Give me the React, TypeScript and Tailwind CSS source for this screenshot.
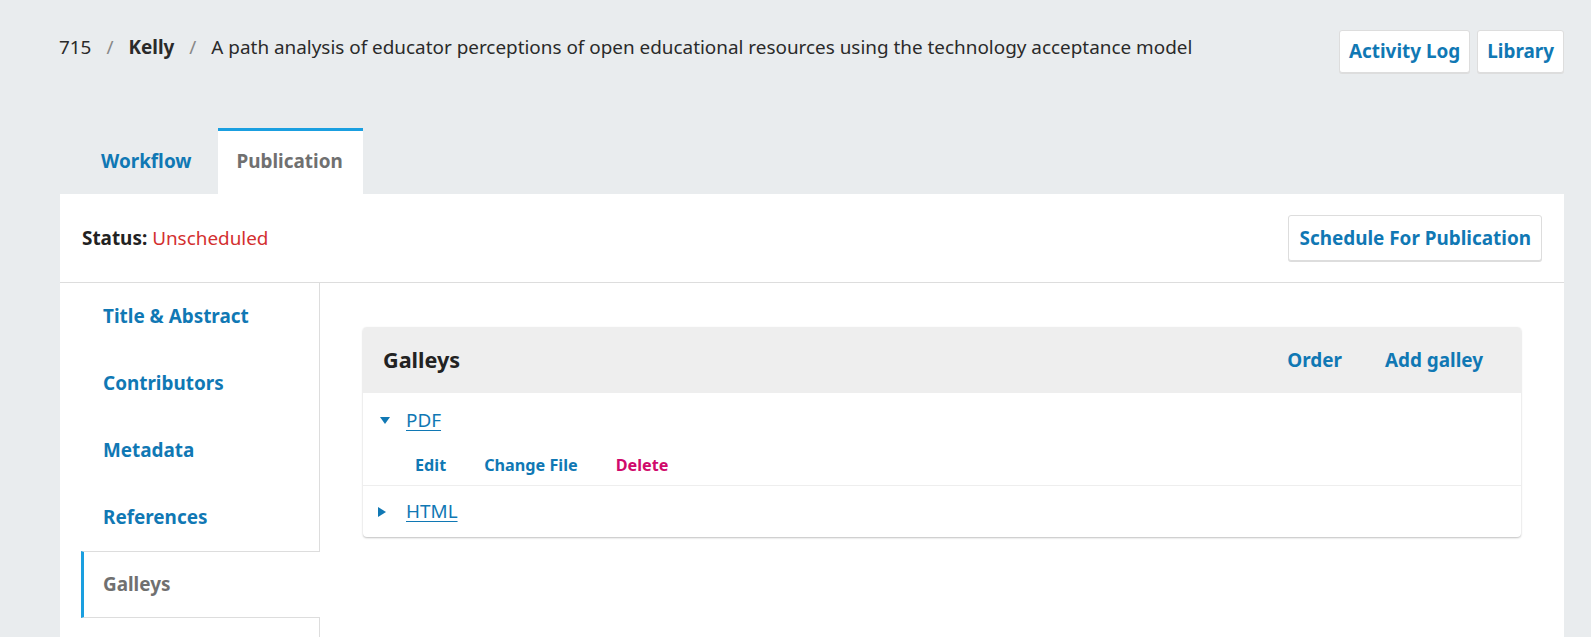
import { useState } from 'react';

const navItems = ['Title & Abstract', 'Contributors', 'Metadata', 'References', 'Galleys'];

const Caret = ({ open }: { open: boolean }) => (
  <svg width="10" height="10" viewBox="0 0 10 10" className="fill-[#1078b4]">
    {open ? <polygon points="0,2 10,2 5,9" /> : <polygon points="1,0 9,5 1,10" />}
  </svg>
);

export default function App() {
  const [active] = useState('Galleys');

  return (
    <div className="h-[637px] w-full overflow-hidden bg-[#e9ecee] font-['Noto_Sans',sans-serif] text-[#222]">
      {/* Top bar */}
      <div className="flex items-start justify-between pl-[59px] pr-[27px] pt-[30px]">
        <div className="mt-[3px] flex items-center text-[18.9px] leading-[28px] text-[#2a2a2a]">
          <span>715</span>
          <span className="mx-[15px] text-[#888]">/</span>
          <span className="font-bold">Kelly</span>
          <span className="mx-[15px] text-[#888]">/</span>
          <span>A path analysis of educator perceptions of open educational resources using the technology acceptance model</span>
        </div>
        <div className="flex gap-[7px]">
          <button className="h-[43px] rounded-[3px] border border-[#ddd] bg-white px-[9px] text-[18.9px] font-bold text-[#1078b4] shadow-[0_1px_0_#ddd]">
            Activity Log
          </button>
          <button className="h-[43px] rounded-[3px] border border-[#ddd] bg-white px-[9px] text-[18.9px] font-bold text-[#1078b4] shadow-[0_1px_0_#ddd]">
            Library
          </button>
        </div>
      </div>

      {/* Tabs */}
      <div className="mt-[55px] flex pl-[81px]">
        <div className="flex h-[66px] items-center pl-[20px] pr-[26px] text-[18.9px] font-bold text-[#1078b4]">Workflow</div>
        <div className="flex h-[66px] items-center border-t-[3px] border-[#1a9fe0] bg-white pl-[19px] pr-[20px] pb-[3px] text-[18.9px] font-bold text-[#707070]">
          Publication
        </div>
      </div>

      {/* Panel */}
      <div className="ml-[60px] mr-[27px] bg-white">
        <div className="flex h-[89px] items-center justify-between border-b border-[#ddd] pl-[22px] pr-[22px]">
          <div className="text-[18.9px]">
            <span className="font-bold text-[#222]">Status:</span>{' '}
            <span className="text-[#d32f2f]">Unscheduled</span>
          </div>
          <button className="h-[46px] rounded-[3px] border border-[#ddd] bg-white px-[10px] text-[18.9px] font-bold text-[#1078b4] shadow-[0_1px_0_#ddd]">
            Schedule For Publication
          </button>
        </div>

        <div className="flex h-[400px]">
          {/* Side nav */}
          <div className="w-[260px] shrink-0 border-r border-[#ddd] pl-[21px]">
            {navItems.map((item) =>
              item === active ? (
                <div
                  key={item}
                  className="relative z-10 -mr-[1px] flex h-[67px] items-center border-y border-l-[3px] border-y-[#ddd] border-l-[#1a9fe0] bg-white pl-[19px] text-[18.9px] font-bold text-[#707070]"
                >
                  {item}
                </div>
              ) : (
                <div key={item} className="flex h-[67px] items-center border-l-[3px] border-transparent pl-[19px] text-[18.9px] font-bold text-[#1078b4]">
                  {item}
                </div>
              )
            )}
          </div>

          {/* Content */}
          <div className="flex-1 px-[43px] pt-[44px]">
            <div className="overflow-hidden rounded-[4px] bg-white shadow-[0_1px_2px_rgba(0,0,0,0.25)]">
              <div className="flex h-[66px] items-center justify-between bg-[#eee] pl-[20px] pr-[38px]">
                <h2 className="text-[21.6px] font-bold text-[#222]">Galleys</h2>
                <div className="flex gap-[43px] text-[18.9px] font-bold text-[#1078b4]">
                  <button>Order</button>
                  <button>Add galley</button>
                </div>
              </div>

              <div className="border-b border-[#eee]">
                <div className="flex h-[54px] items-center pl-[17px]">
                  <Caret open />
                  <a className="ml-[16px] text-[18.9px] text-[#1078b4] underline underline-offset-[3px]">PDF</a>
                </div>
                <div className="flex h-[38px] items-center gap-[38px] pl-[52px] pb-[2px] text-[16.2px] font-bold">
                  <button className="text-[#1078b4]">Edit</button>
                  <button className="text-[#1078b4]">Change File</button>
                  <button className="text-[#d00a6c]">Delete</button>
                </div>
              </div>

              <div className="flex h-[51px] items-center pl-[14px]">
                <Caret open={false} />
                <a className="ml-[19px] text-[18.9px] text-[#1078b4] underline underline-offset-[3px]">HTML</a>
              </div>
            </div>
          </div>
        </div>
      </div>
    </div>
  );
}
